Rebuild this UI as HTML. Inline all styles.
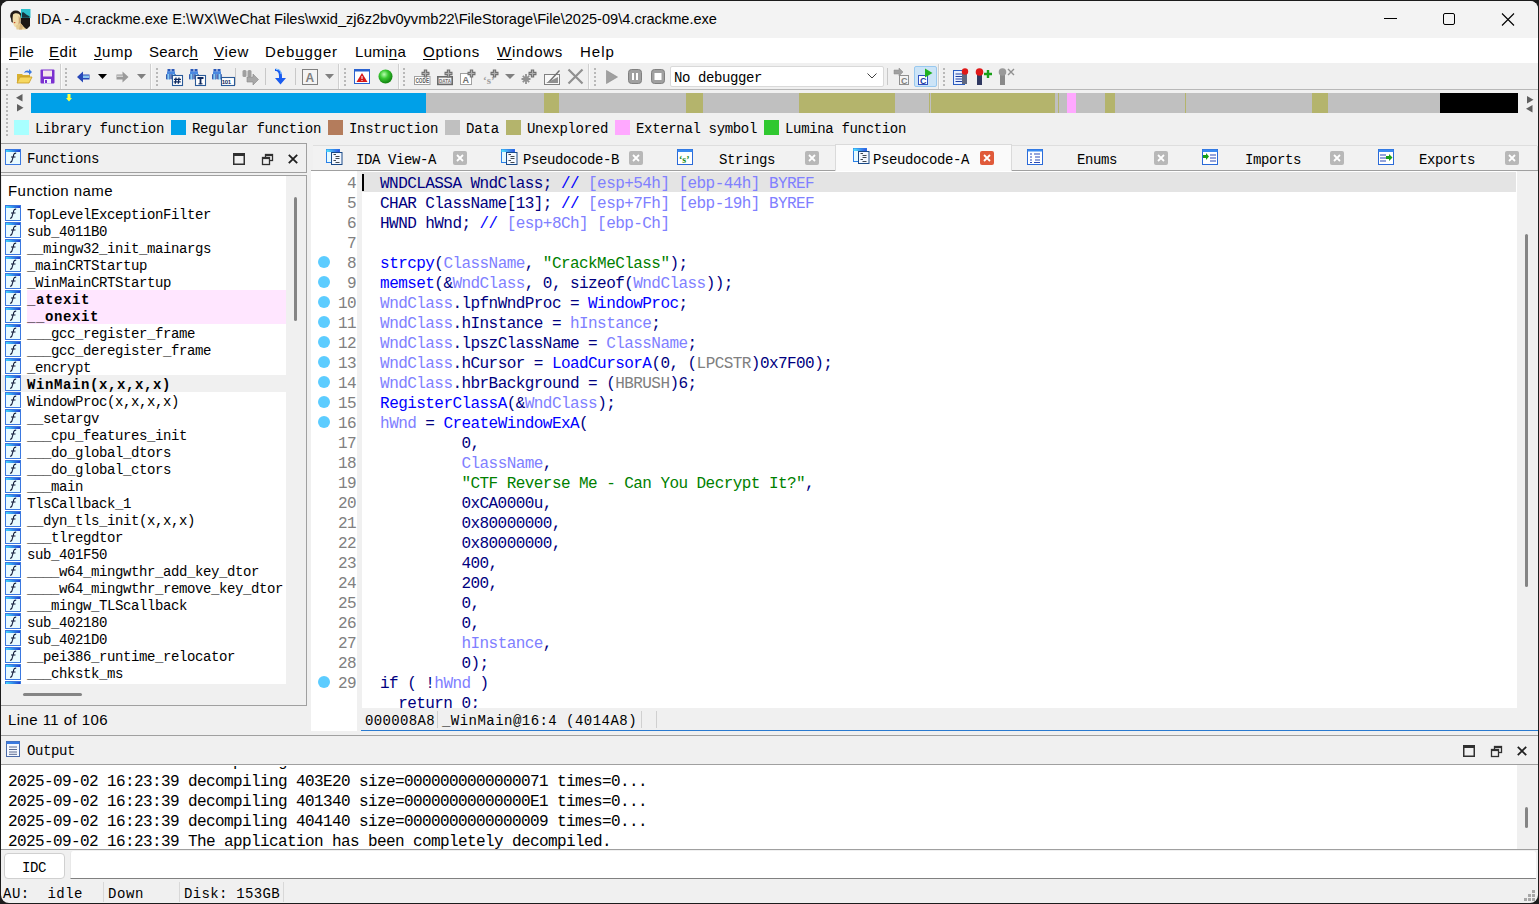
<!DOCTYPE html><html><head><meta charset="utf-8"><style>
*{margin:0;padding:0;box-sizing:border-box}
html,body{width:1539px;height:904px;overflow:hidden;background:#1c1c1c}
body{position:relative;font-family:"Liberation Sans",sans-serif;color:#000}
.a{position:absolute;white-space:pre}
.m{font-family:"Liberation Mono",monospace}
svg{position:absolute;overflow:visible}
</style></head><body>
<svg width="0" height="0" style="position:absolute"><defs><linearGradient id="fb" x1="0" x2="1"><stop offset="0" stop-color="#40d8ff"/><stop offset="1" stop-color="#2040d0"/></linearGradient><symbol id="fi" viewBox="0 0 16 16"><rect x="0.5" y="0.5" width="15" height="15" fill="#e8faff" stroke="#3a78e0"/><rect x="1" y="1" width="14" height="2" fill="url(#fb)"/><path d="M5 13.2 C6.5 13.5 7 12.5 7.5 10 L8.8 5.5 C9.2 4.3 10 4 11.2 4.2 M6 8 L10.5 8" stroke="#101838" stroke-width="1.05" fill="none"/></symbol></defs></svg>
<div class="a" style="left:1px;top:1px;width:1537px;height:902px;background:#f0f0f0;border-radius:8px"></div>
<div class="a" style="left:1px;top:1px;width:1537px;height:37px;background:#f3f3f3;border-radius:8px 8px 0 0"></div>
<svg style="left:10px;top:9px" width="21" height="21" viewBox="0 0 21 21">
<path d="M10 8 L20 8 L20 17 L17 20 L11 19 Z" fill="#1a1614"/>
<ellipse cx="5.8" cy="6.5" rx="5.6" ry="5" fill="#221a16"/>
<path d="M0.5 7 L3 7 L3.5 14 L1.5 13 Z" fill="#221a16"/>
<path d="M3 5.5 C5 3.5 9 3.8 10.3 6.5 C11 9 10.8 13 9.5 16 C8.5 18.5 6 19 4.5 17.5 C3 15.5 2.5 12 2.6 9 Z" fill="#f0dcaa"/>
<path d="M8.5 7 C10 8 10.5 11 10 14 C9.5 16 8.6 17 8 17 C8.8 14 9 10 8.5 7Z" fill="#c9a070"/>
<path d="M6 16.5 L10.5 14 L13 17 L16.5 20.5 L6.5 20.5 Z" fill="#e6cc92"/>
<path d="M10.5 14 L13 17 L12 20.5 L9 20.5 Z" fill="#cfae78"/>
<ellipse cx="4.6" cy="13.6" rx="0.9" ry="0.7" fill="#c84420"/>
<rect x="11" y="0" width="9.5" height="9" fill="#2cc0cc"/>
<path d="M12 3.5 L13.5 3.2 L17 6 L19.5 7.2 L19.5 8.8 L12 8.8 Z" fill="#16363e"/>
</svg>
<div class="a" style="left:37px;top:8px;font-family:'Liberation Sans';font-size:14.6px;font-weight:400;letter-spacing:-0.011px;line-height:22px">IDA - 4.crackme.exe E:\WX\WeChat Files\wxid_zj6z2bv0yvmb22\FileStorage\File\2025-09\4.crackme.exe</div>
<div class="a" style="left:1384px;top:18px;width:13px;height:1px;background:#000"></div>
<div class="a" style="left:1443px;top:13px;width:12px;height:12px;border:1px solid #000;border-radius:2px"></div>
<svg style="left:1501px;top:13px" width="14" height="13" viewBox="0 0 14 13"><path d="M1 0.5 L13 12.5 M13 0.5 L1 12.5" stroke="#000" stroke-width="1.1"/></svg>
<div class="a" style="left:1px;top:38px;width:1537px;height:25px;background:#fff"></div>
<div class="a" style="left:9px;top:42px;font-family:'Liberation Sans';font-size:15px;font-weight:400;letter-spacing:0.207px;line-height:20px;text-underline-offset:2px"><u>F</u>ile</div>
<div class="a" style="left:49px;top:42px;font-family:'Liberation Sans';font-size:15px;font-weight:400;letter-spacing:0.535px;line-height:20px;text-underline-offset:2px"><u>E</u>dit</div>
<div class="a" style="left:94px;top:42px;font-family:'Liberation Sans';font-size:15px;font-weight:400;letter-spacing:0.578px;line-height:20px;text-underline-offset:2px"><u>J</u>ump</div>
<div class="a" style="left:149px;top:42px;font-family:'Liberation Sans';font-size:15px;font-weight:400;letter-spacing:0.245px;line-height:20px;text-underline-offset:2px">Searc<u>h</u></div>
<div class="a" style="left:214px;top:42px;font-family:'Liberation Sans';font-size:15px;font-weight:400;letter-spacing:0.688px;line-height:20px;text-underline-offset:2px"><u>V</u>iew</div>
<div class="a" style="left:265px;top:42px;font-family:'Liberation Sans';font-size:15px;font-weight:400;letter-spacing:0.889px;line-height:20px;text-underline-offset:2px">Deb<u>u</u>gger</div>
<div class="a" style="left:355px;top:42px;font-family:'Liberation Sans';font-size:15px;font-weight:400;letter-spacing:0.299px;line-height:20px;text-underline-offset:2px">Lumi<u>n</u>a</div>
<div class="a" style="left:423px;top:42px;font-family:'Liberation Sans';font-size:15px;font-weight:400;letter-spacing:0.757px;line-height:20px;text-underline-offset:2px"><u>O</u>ptions</div>
<div class="a" style="left:497px;top:42px;font-family:'Liberation Sans';font-size:15px;font-weight:400;letter-spacing:0.734px;line-height:20px;text-underline-offset:2px"><u>W</u>indows</div>
<div class="a" style="left:580px;top:42px;font-family:'Liberation Sans';font-size:15px;font-weight:400;letter-spacing:1.035px;line-height:20px;text-underline-offset:2px">Help</div>
<div class="a" style="left:1px;top:63px;width:1537px;height:26px;background:#f0f0f0"></div>
<div class="a" style="left:1px;top:89px;width:1537px;height:1px;background:#b8b8b8"></div>
<div class="a" style="left:6px;top:68px;width:2px;height:18px;background:repeating-linear-gradient(#b8b8b8 0 2px,transparent 2px 4px)"></div>
<div class="a" style="left:65px;top:68px;width:2px;height:18px;background:repeating-linear-gradient(#b8b8b8 0 2px,transparent 2px 4px)"></div>
<div class="a" style="left:156px;top:68px;width:2px;height:18px;background:repeating-linear-gradient(#b8b8b8 0 2px,transparent 2px 4px)"></div>
<div class="a" style="left:344px;top:68px;width:2px;height:18px;background:repeating-linear-gradient(#b8b8b8 0 2px,transparent 2px 4px)"></div>
<div class="a" style="left:403px;top:68px;width:2px;height:18px;background:repeating-linear-gradient(#b8b8b8 0 2px,transparent 2px 4px)"></div>
<div class="a" style="left:594px;top:68px;width:2px;height:18px;background:repeating-linear-gradient(#b8b8b8 0 2px,transparent 2px 4px)"></div>
<div class="a" style="left:943px;top:68px;width:2px;height:18px;background:repeating-linear-gradient(#b8b8b8 0 2px,transparent 2px 4px)"></div>
<div class="a" style="left:60px;top:64px;width:1px;height:25px;background:#d0d0d0"></div>
<div class="a" style="left:61px;top:64px;width:1px;height:25px;background:#fafafa"></div>
<div class="a" style="left:150px;top:64px;width:1px;height:25px;background:#d0d0d0"></div>
<div class="a" style="left:151px;top:64px;width:1px;height:25px;background:#fafafa"></div>
<div class="a" style="left:338px;top:64px;width:1px;height:25px;background:#d0d0d0"></div>
<div class="a" style="left:339px;top:64px;width:1px;height:25px;background:#fafafa"></div>
<div class="a" style="left:398px;top:64px;width:1px;height:25px;background:#d0d0d0"></div>
<div class="a" style="left:399px;top:64px;width:1px;height:25px;background:#fafafa"></div>
<div class="a" style="left:588px;top:64px;width:1px;height:25px;background:#d0d0d0"></div>
<div class="a" style="left:589px;top:64px;width:1px;height:25px;background:#fafafa"></div>
<div class="a" style="left:938px;top:64px;width:1px;height:25px;background:#d0d0d0"></div>
<div class="a" style="left:939px;top:64px;width:1px;height:25px;background:#fafafa"></div>
<div class="a" style="left:235px;top:68px;width:1px;height:17px;background:#c8c8c8"></div>
<div class="a" style="left:265px;top:68px;width:1px;height:17px;background:#c8c8c8"></div>
<div class="a" style="left:295px;top:68px;width:1px;height:17px;background:#c8c8c8"></div>
<div class="a" style="left:887px;top:68px;width:1px;height:17px;background:#c8c8c8"></div>
<svg style="left:16px;top:68px" width="17" height="17" viewBox="0 0 17 17"><path d="M1 6 L6 6 L7 7 L14 7 L14 9 L4 9 L1 15Z" fill="#d8b030"/><path d="M4 9 L16 9 L13 15 L1 15Z" fill="#f6d860" stroke="#c89a20" stroke-width="0.8"/><path d="M8 5 C9 2 12 2 13 3 L13 1 L16 4 L13 7 L13 5 C11 4 10 4 8 5Z" fill="#3a78e0"/></svg>
<svg style="left:40px;top:69px" width="15" height="15" viewBox="0 0 15 15"><rect x="0.5" y="0.5" width="14" height="14" rx="1" fill="#7b2fd0"/><rect x="3" y="1.5" width="9" height="6" fill="#f4e4ec"/><rect x="4" y="10" width="7" height="4.5" fill="#f0f0ff"/><rect x="5" y="11" width="2" height="3" fill="#7b2fd0"/></svg>
<svg style="left:77px;top:71px" width="13" height="12" viewBox="0 0 13 12"><path d="M0 6 L6 0.5 L6 3.5 L12.5 3.5 L12.5 8.5 L6 8.5 L6 11.5Z" fill="#2848b8"/><path d="M6 4.5 L12 4.5 L12 7 L6 7Z" fill="#8cc8f0"/></svg>
<svg style="left:98px;top:74px" width="9" height="5" viewBox="0 0 9 5"><path d="M0 0 L9 0 L4.5 5Z" fill="#000"/></svg>
<svg style="left:116px;top:71px" width="13" height="12" viewBox="0 0 13 12"><path d="M12.5 6 L6.5 0.5 L6.5 3.5 L0.5 3.5 L0.5 8.5 L6.5 8.5 L6.5 11.5Z" fill="#9a9a9a"/><path d="M1 4.5 L7 4.5 L7 6 L1 6Z" fill="#d0d0d0"/></svg>
<svg style="left:137px;top:74px" width="9" height="5" viewBox="0 0 9 5"><path d="M0 0 L9 0 L4.5 5Z" fill="#808080"/></svg>
<svg style="left:166px;top:69px" width="17" height="17" viewBox="0 0 17 17"><defs><linearGradient id="bg166" x1="0" x2="1"><stop offset="0" stop-color="#1a3a98"/><stop offset="0.5" stop-color="#90d8ff"/><stop offset="1" stop-color="#1a3a98"/></linearGradient></defs><rect x="1.5" y="0" width="3" height="2.6" fill="#2a58b8"/><rect x="5.5" y="0" width="3" height="2.6" fill="#2a58b8"/><rect x="1" y="2.4" width="4" height="3" fill="#4a88e0"/><rect x="5" y="2.4" width="4" height="3" fill="#4a88e0"/><rect x="0" y="5" width="4.6" height="5.5" rx="0.8" fill="url(#bg166)"/><rect x="5.2" y="5" width="4.6" height="5.5" rx="0.8" fill="url(#bg166)"/><rect x="6.5" y="6.5" width="10" height="10" fill="#fff" stroke="#2a5a98" stroke-width="1.1"/><path d="M10 8.5 L9.3 14.8 M13 8.5 L12.3 14.8 M8 10.3 L15 10.3 M7.7 12.9 L14.7 12.9" stroke="#0e2a60" stroke-width="1.3"/></svg>
<svg style="left:189px;top:69px" width="17" height="17" viewBox="0 0 17 17"><defs><linearGradient id="bg189" x1="0" x2="1"><stop offset="0" stop-color="#1a3a98"/><stop offset="0.5" stop-color="#90d8ff"/><stop offset="1" stop-color="#1a3a98"/></linearGradient></defs><rect x="1.5" y="0" width="3" height="2.6" fill="#2a58b8"/><rect x="5.5" y="0" width="3" height="2.6" fill="#2a58b8"/><rect x="1" y="2.4" width="4" height="3" fill="#4a88e0"/><rect x="5" y="2.4" width="4" height="3" fill="#4a88e0"/><rect x="0" y="5" width="4.6" height="5.5" rx="0.8" fill="url(#bg189)"/><rect x="5.2" y="5" width="4.6" height="5.5" rx="0.8" fill="url(#bg189)"/><rect x="6.5" y="6.5" width="10" height="10" fill="#fff" stroke="#2a5a98" stroke-width="1.1"/><path d="M8.5 9 L14.5 9 M11.5 9 L11.5 15.2" stroke="#0e2a60" stroke-width="1.8"/><path d="M9.5 14.8 L13.5 14.8" stroke="#0e2a60" stroke-width="1"/></svg>
<svg style="left:212px;top:69px" width="17" height="17" viewBox="0 0 17 17"><defs><linearGradient id="bg212" x1="0" x2="1"><stop offset="0" stop-color="#1a3a98"/><stop offset="0.5" stop-color="#90d8ff"/><stop offset="1" stop-color="#1a3a98"/></linearGradient></defs><rect x="1.5" y="0" width="3" height="2.6" fill="#2a58b8"/><rect x="5.5" y="0" width="3" height="2.6" fill="#2a58b8"/><rect x="1" y="2.4" width="4" height="3" fill="#4a88e0"/><rect x="5" y="2.4" width="4" height="3" fill="#4a88e0"/><rect x="0" y="5" width="4.6" height="5.5" rx="0.8" fill="url(#bg212)"/><rect x="5.2" y="5" width="4.6" height="5.5" rx="0.8" fill="url(#bg212)"/><rect x="9.5" y="8.5" width="13" height="8" fill="#fff" stroke="#2a5a98" stroke-width="1.1"/><text x="9.8" y="14.6" font-family="Liberation Sans" font-size="6" font-weight="bold" fill="#0e2a60" letter-spacing="-0.3">101</text></svg>
<svg style="left:242px;top:68px" width="17" height="17" viewBox="0 0 17 17"><rect x="0.5" y="2" width="4" height="7" rx="1.5" fill="#a0a0a0"/><rect x="5.5" y="2" width="4" height="7" rx="1.5" fill="#a0a0a0"/><path d="M5 9 L11 9 L11 6 L16.5 11.5 L11 17 L11 14 L5 14Z" fill="#a8a8a8" stroke="#888" stroke-width="0.6"/></svg>
<svg style="left:274px;top:68px" width="13" height="17" viewBox="0 0 13 17"><path d="M1 1 C5 0 8 3 8 8 L8 10 L12 10 L6.5 16.5 L1 10 L5 10 L5 8 C5 5 4 3 1 3Z" fill="#1a5cf0"/><path d="M2 1.5 C5 1 7 3 7 6" stroke="#8fd0ff" stroke-width="1" fill="none"/></svg>
<svg style="left:302px;top:69px" width="16" height="16" viewBox="0 0 16 16"><rect x="0.5" y="0.5" width="15" height="15" fill="#f4f4f4" stroke="#808080"/><text x="3.5" y="13" font-family="Liberation Sans" font-weight="bold" font-size="12" fill="#808080">A</text></svg>
<svg style="left:325px;top:74px" width="9" height="5" viewBox="0 0 9 5"><path d="M0 0 L9 0 L4.5 5Z" fill="#808080"/></svg>
<svg style="left:354px;top:69px" width="16" height="15" viewBox="0 0 16 15"><rect x="0.5" y="0.5" width="15" height="14" fill="#fff" stroke="#2a62d0"/><rect x="0.5" y="0.5" width="15" height="2" fill="#2a62d0"/><path d="M8 4 L13.5 13 L2.5 13Z" fill="#d81818"/><rect x="7.5" y="7" width="1" height="3" fill="#fff"/><rect x="7.5" y="11" width="1" height="1" fill="#fff"/></svg>
<svg style="left:378px;top:69px" width="15" height="15" viewBox="0 0 15 15"><defs><radialGradient id="gc" cx="0.4" cy="0.35" r="0.6"><stop offset="0" stop-color="#b8ffb0"/><stop offset="0.5" stop-color="#38c830"/><stop offset="1" stop-color="#168a14"/></radialGradient></defs><circle cx="7.5" cy="7.5" r="7" fill="url(#gc)"/></svg>
<svg style="left:414px;top:68px" width="18" height="18" viewBox="0 0 18 18"><rect x="0.5" y="8.5" width="15.5" height="8" fill="#fff" stroke="#a0a0a0"/><text x="1.5" y="15.3" font-family="Liberation Sans" font-size="6.5" font-weight="bold" fill="#585858" textLength="13.5" lengthAdjust="spacingAndGlyphs">CODE</text><path d="M11.5 1.5 L11.5 9.5 M7.5 5.5 L15.5 5.5" stroke="#707070" stroke-width="3.4"/><path d="M11.5 2.5 L11.5 8.5 M8.5 5.5 L14.5 5.5" stroke="#b0b0b0" stroke-width="1.2"/></svg>
<svg style="left:437px;top:68px" width="18" height="18" viewBox="0 0 18 18"><rect x="0.8" y="8.8" width="14.4" height="7.6" fill="#f4f4f4" stroke="#6a6a6a" stroke-width="1.6"/><text x="2" y="15" font-family="Liberation Sans" font-size="6" font-weight="bold" fill="#707070" textLength="12" lengthAdjust="spacingAndGlyphs">DATA</text><path d="M11.5 1.5 L11.5 9.5 M7.5 5.5 L15.5 5.5" stroke="#707070" stroke-width="3.4"/><path d="M11.5 2.5 L11.5 8.5 M8.5 5.5 L14.5 5.5" stroke="#b0b0b0" stroke-width="1.2"/></svg>
<svg style="left:460px;top:68px" width="18" height="18" viewBox="0 0 18 18"><rect x="0.5" y="5.5" width="11" height="11" fill="#fff" stroke="#a0a0a0"/><text x="2.5" y="15" font-family="Liberation Sans" font-size="9" font-weight="bold" fill="#707070">A</text><path d="M11.5 1.5 L11.5 9.5 M7.5 5.5 L15.5 5.5" stroke="#707070" stroke-width="3.4"/><path d="M11.5 2.5 L11.5 8.5 M8.5 5.5 L14.5 5.5" stroke="#b0b0b0" stroke-width="1.2"/></svg>
<svg style="left:483px;top:68px" width="18" height="18" viewBox="0 0 18 18"><text x="0" y="16" font-family="Liberation Serif" font-size="11" font-weight="bold" fill="#a0a0a0">‘s’</text><path d="M11.5 1.5 L11.5 9.5 M7.5 5.5 L15.5 5.5" stroke="#707070" stroke-width="3.4"/><path d="M11.5 2.5 L11.5 8.5 M8.5 5.5 L14.5 5.5" stroke="#b0b0b0" stroke-width="1.2"/></svg>
<svg style="left:505px;top:74px" width="10" height="5" viewBox="0 0 10 5"><path d="M0 0 L10 0 L5 5Z" fill="#808080"/></svg>
<svg style="left:521px;top:68px" width="18" height="18" viewBox="0 0 18 18"><path d="M5 6 L5 16 M0.5 11 L9.5 11 M1.8 7.8 L8.2 14.2 M8.2 7.8 L1.8 14.2" stroke="#909090" stroke-width="1.8"/><path d="M11.5 1.5 L11.5 9.5 M7.5 5.5 L15.5 5.5" stroke="#707070" stroke-width="3.4"/><path d="M11.5 2.5 L11.5 8.5 M8.5 5.5 L14.5 5.5" stroke="#b0b0b0" stroke-width="1.2"/></svg>
<svg style="left:544px;top:68px" width="17" height="17" viewBox="0 0 17 17"><rect x="0.5" y="6.5" width="15" height="10" fill="#f8f8f8" stroke="#808080"/><path d="M3 15 L15 2 L16 3 L5 15Z" fill="#707070"/><path d="M2 15 L14 15 L14 9Z" fill="#909090"/></svg>
<svg style="left:567px;top:68px" width="17" height="17" viewBox="0 0 17 17"><path d="M1.5 1.5 L15.5 15.5 M15.5 1.5 L1.5 15.5" stroke="#909090" stroke-width="2.2"/></svg>
<svg style="left:606px;top:70px" width="12" height="14" viewBox="0 0 12 14"><path d="M0.5 0.5 L11.5 7 L0.5 13.5Z" fill="#a0a0a0" stroke="#8a8a8a" stroke-width="0.6"/></svg>
<svg style="left:628px;top:69px" width="14" height="15" viewBox="0 0 14 15"><rect x="0.5" y="0.5" width="13" height="14" rx="3" fill="#a0a0a0" stroke="#808080"/><rect x="4" y="4" width="2" height="7" fill="#fff"/><rect x="8" y="4" width="2" height="7" fill="#fff"/></svg>
<svg style="left:651px;top:69px" width="14" height="15" viewBox="0 0 14 15"><rect x="0.5" y="0.5" width="13" height="14" rx="3" fill="#a0a0a0" stroke="#808080"/><rect x="3.5" y="4" width="7" height="7" fill="#fff"/></svg>
<div class="a" style="left:670px;top:66px;width:214px;height:21px;background:#fff;border:1px solid #d9d9d9;border-radius:2px"></div>
<div class="a" style="left:674px;top:70px;font-family:'Liberation Mono';font-size:14px;font-weight:400;letter-spacing:-0.402px;line-height:17px">No debugger</div>
<svg style="left:867px;top:73px" width="10" height="6" viewBox="0 0 10 6"><path d="M0.5 0.5 L5 5 L9.5 0.5" stroke="#404040" stroke-width="1" fill="none"/></svg>
<svg style="left:893px;top:68px" width="17" height="17" viewBox="0 0 17 17"><path d="M1 2 L6 2 L6 0 L10 4 L6 8 L6 6 L1 6Z" fill="#a0a0a0" stroke="#888" stroke-width="0.5"/><rect x="6.5" y="7.5" width="9" height="9" fill="#f4f4f4" stroke="#909090"/><text x="8" y="15.5" font-family="Liberation Sans" font-size="9" font-weight="bold" fill="#808080">C</text></svg>
<div class="a" style="left:914px;top:66px;width:23px;height:21px;background:#cce4f7;border:1px solid #99c9ef;border-radius:2px"></div>
<svg style="left:917px;top:68px" width="17" height="17" viewBox="0 0 17 17"><rect x="1.5" y="7.5" width="9" height="9" fill="#fff" stroke="#3050c0"/><text x="3" y="15.5" font-family="Liberation Sans" font-size="9" font-weight="bold" fill="#1a3aa0">C</text><path d="M8 0.5 L15.5 5 L8 9.5Z" fill="#20b020"/></svg>
<svg style="left:953px;top:68px" width="16" height="17" viewBox="0 0 16 17"><rect x="0.5" y="2.5" width="11" height="14" fill="#e8f0ff" stroke="#2a5cc0"/><path d="M2.5 6 L9 6 M2.5 8.5 L9 8.5 M2.5 11 L9 11 M2.5 13.5 L9 13.5" stroke="#2040a0" stroke-width="1"/><rect x="9" y="5" width="5" height="11" fill="#606880"/><circle cx="12" cy="3.5" r="3.2" fill="#e01818"/></svg>
<svg style="left:975px;top:68px" width="18" height="17" viewBox="0 0 18 17"><rect x="2" y="5" width="5" height="12" fill="#303860"/><circle cx="4.5" cy="4" r="3.8" fill="#e01818"/><path d="M13 2 L13 10 M9 6 L17 6" stroke="#18a018" stroke-width="2.4"/></svg>
<svg style="left:998px;top:68px" width="18" height="17" viewBox="0 0 18 17"><rect x="2" y="5" width="5" height="12" fill="#8a8a8a"/><circle cx="4.5" cy="4" r="3.8" fill="#9a9a9a"/><path d="M10 1 L16 7 M16 1 L10 7" stroke="#909090" stroke-width="1.4"/></svg>
<div class="a" style="left:6px;top:94px;width:2px;height:44px;background:repeating-linear-gradient(#b8b8b8 0 2px,transparent 2px 4px)"></div>
<svg style="left:16px;top:94px" width="7" height="8" viewBox="0 0 7 8"><path d="M6.5 0 L6.5 7.5 L0 3.75Z" fill="#606060"/></svg>
<svg style="left:17px;top:104px" width="7" height="8" viewBox="0 0 7 8"><path d="M0 0 L0 7.5 L6.5 3.75Z" fill="#606060"/></svg>
<svg style="left:1527px;top:96px" width="7" height="8" viewBox="0 0 7 8"><path d="M0 0 L0 7.5 L6.5 3.75Z" fill="#606060"/></svg>
<svg style="left:1526px;top:105px" width="7" height="8" viewBox="0 0 7 8"><path d="M6.5 0 L6.5 7.5 L0 3.75Z" fill="#606060"/></svg>
<div class="a" style="left:31px;top:93px;width:395px;height:20px;background:#00a0e8"></div>
<div class="a" style="left:426px;top:93px;width:1014px;height:20px;background:#c0c0c0"></div>
<div class="a" style="left:544px;top:93px;width:15px;height:20px;background:#b4b46c"></div>
<div class="a" style="left:686px;top:93px;width:17px;height:20px;background:#b4b46c"></div>
<div class="a" style="left:799px;top:93px;width:96px;height:20px;background:#b4b46c"></div>
<div class="a" style="left:929px;top:93px;width:1px;height:20px;background:#b4b46c"></div>
<div class="a" style="left:931px;top:93px;width:124px;height:20px;background:#b4b46c"></div>
<div class="a" style="left:1058px;top:93px;width:1px;height:20px;background:#b4b46c"></div>
<div class="a" style="left:1067px;top:93px;width:9px;height:20px;background:#ffa8ff"></div>
<div class="a" style="left:1105px;top:93px;width:10px;height:20px;background:#b4b46c"></div>
<div class="a" style="left:1185px;top:93px;width:1px;height:20px;background:#b4b46c"></div>
<div class="a" style="left:1312px;top:93px;width:16px;height:20px;background:#b4b46c"></div>
<div class="a" style="left:1440px;top:93px;width:78px;height:20px;background:#000"></div>
<svg style="left:66px;top:94px" width="6" height="8" viewBox="0 0 6 8"><path d="M1.5 0 L4.5 0 L4.5 4 L6 4 L3 7.5 L0 4 L1.5 4Z" fill="#ffff40"/></svg>
<div class="a" style="left:14px;top:120px;width:15px;height:15px;background:#a8ffff"></div>
<div class="a" style="left:35px;top:121px;font-family:'Liberation Mono';font-size:14px;font-weight:400;letter-spacing:-0.339px;line-height:17px">Library function</div>
<div class="a" style="left:171px;top:120px;width:15px;height:15px;background:#00a0e8"></div>
<div class="a" style="left:192px;top:121px;font-family:'Liberation Mono';font-size:14px;font-weight:400;letter-spacing:-0.339px;line-height:17px">Regular function</div>
<div class="a" style="left:328px;top:120px;width:15px;height:15px;background:#b47c5c"></div>
<div class="a" style="left:349px;top:121px;font-family:'Liberation Mono';font-size:14px;font-weight:400;letter-spacing:-0.311px;line-height:17px">Instruction</div>
<div class="a" style="left:445px;top:120px;width:15px;height:15px;background:#c0c0c0"></div>
<div class="a" style="left:466px;top:121px;font-family:'Liberation Mono';font-size:14px;font-weight:400;letter-spacing:-0.152px;line-height:17px">Data</div>
<div class="a" style="left:506px;top:120px;width:15px;height:15px;background:#b4b46c"></div>
<div class="a" style="left:527px;top:121px;font-family:'Liberation Mono';font-size:14px;font-weight:400;letter-spacing:-0.302px;line-height:17px">Unexplored</div>
<div class="a" style="left:615px;top:120px;width:15px;height:15px;background:#ffa8ff"></div>
<div class="a" style="left:636px;top:121px;font-family:'Liberation Mono';font-size:14px;font-weight:400;letter-spacing:-0.335px;line-height:17px">External symbol</div>
<div class="a" style="left:764px;top:120px;width:15px;height:15px;background:#30c830"></div>
<div class="a" style="left:785px;top:121px;font-family:'Liberation Mono';font-size:14px;font-weight:400;letter-spacing:-0.335px;line-height:17px">Lumina function</div>
<div class="a" style="left:1px;top:143px;width:306px;height:1px;background:#a0a0a0"></div>
<div class="a" style="left:1px;top:143px;width:306px;height:30px;background:#f0f0f0;border:1px solid #a0a0a0;border-left:none"></div>
<defs></defs>
<svg style="left:5px;top:149px" width="16" height="16" viewBox="0 0 16 16"><defs><linearGradient id="fb" x1="0" x2="1"><stop offset="0" stop-color="#40d8ff"/><stop offset="1" stop-color="#2040d0"/></linearGradient></defs><rect x="0.5" y="0.5" width="15" height="15" fill="#e8faff" stroke="#3a78e0"/><rect x="1" y="1" width="14" height="2" fill="url(#fb)"/><path d="M5 13.2 C6.5 13.5 7 12.5 7.5 10 L8.8 5.5 C9.2 4.3 10 4 11.2 4.2 M6 8 L10.5 8" stroke="#101838" stroke-width="1.05" fill="none"/></svg>
<div class="a" style="left:27px;top:151px;font-family:'Liberation Mono';font-size:14px;font-weight:400;letter-spacing:-0.403px;line-height:17px">Functions</div>
<svg style="left:233px;top:153px" width="12" height="12" viewBox="0 0 12 12"><rect x="0.75" y="0.75" width="10.5" height="10.5" fill="none" stroke="#303030" stroke-width="1.5"/><rect x="0" y="0" width="12" height="3" fill="#303030"/></svg>
<svg style="left:262px;top:154px" width="11" height="11" viewBox="0 0 11 11"><rect x="3.5" y="0.5" width="7" height="6" fill="none" stroke="#303030" stroke-width="1.3"/><rect x="3.5" y="0.5" width="7" height="1.6" fill="#303030"/><rect x="0.5" y="3.5" width="7" height="7" fill="#f0f0f0" stroke="#303030" stroke-width="1.3"/><rect x="0.5" y="3.5" width="7" height="1.6" fill="#303030"/></svg>
<svg style="left:288px;top:154px" width="10" height="10" viewBox="0 0 10 10"><path d="M0.8 0.8 L9.2 9.2 M9.2 0.8 L0.8 9.2" stroke="#202020" stroke-width="1.8"/></svg>
<div class="a" style="left:1px;top:175px;width:306px;height:531px;background:#f0f0f0;border:1px solid #a0a0a0;border-left:none"></div>
<div class="a" style="left:2px;top:176px;width:284px;height:508px;background:#fff"></div>
<div class="a" style="left:294px;top:197px;width:3px;height:124px;background:#858585;border-radius:1.5px"></div>
<div class="a" style="left:23px;top:693px;width:59px;height:3px;background:#858585;border-radius:1.5px"></div>
<div class="a" style="left:8px;top:181px;font-family:'Liberation Sans';font-size:15px;font-weight:400;letter-spacing:0.444px;line-height:20px;color:#000">Function name</div>
<div class="a" style="left:2px;top:176px;width:284px;height:508px;overflow:hidden">
<svg style="left:3px;top:29px" width="16" height="16" viewBox="0 0 16 16"><use href="#fi"/></svg>
<div class="a m" style="left:25px;top:31px;font-size:14px;line-height:17px;letter-spacing:-0.4px">TopLevelExceptionFilter</div>
<svg style="left:3px;top:46px" width="16" height="16" viewBox="0 0 16 16"><use href="#fi"/></svg>
<div class="a m" style="left:25px;top:48px;font-size:14px;line-height:17px;letter-spacing:-0.4px">sub_4011B0</div>
<svg style="left:3px;top:63px" width="16" height="16" viewBox="0 0 16 16"><use href="#fi"/></svg>
<div class="a m" style="left:25px;top:65px;font-size:14px;line-height:17px;letter-spacing:-0.4px">__mingw32_init_mainargs</div>
<svg style="left:3px;top:80px" width="16" height="16" viewBox="0 0 16 16"><use href="#fi"/></svg>
<div class="a m" style="left:25px;top:82px;font-size:14px;line-height:17px;letter-spacing:-0.4px">_mainCRTStartup</div>
<svg style="left:3px;top:97px" width="16" height="16" viewBox="0 0 16 16"><use href="#fi"/></svg>
<div class="a m" style="left:25px;top:99px;font-size:14px;line-height:17px;letter-spacing:-0.4px">_WinMainCRTStartup</div>
<div class="a" style="left:25px;top:114px;width:259px;height:17px;background:#ffe6ff"></div>
<svg style="left:3px;top:114px" width="16" height="16" viewBox="0 0 16 16"><use href="#fi"/></svg>
<div class="a m" style="left:25px;top:116px;font-size:14px;line-height:17px;font-weight:bold;letter-spacing:0.6px">_atexit</div>
<div class="a" style="left:25px;top:131px;width:259px;height:17px;background:#ffe6ff"></div>
<svg style="left:3px;top:131px" width="16" height="16" viewBox="0 0 16 16"><use href="#fi"/></svg>
<div class="a m" style="left:25px;top:133px;font-size:14px;line-height:17px;font-weight:bold;letter-spacing:0.6px">__onexit</div>
<svg style="left:3px;top:148px" width="16" height="16" viewBox="0 0 16 16"><use href="#fi"/></svg>
<div class="a m" style="left:25px;top:150px;font-size:14px;line-height:17px;letter-spacing:-0.4px">___gcc_register_frame</div>
<svg style="left:3px;top:165px" width="16" height="16" viewBox="0 0 16 16"><use href="#fi"/></svg>
<div class="a m" style="left:25px;top:167px;font-size:14px;line-height:17px;letter-spacing:-0.4px">___gcc_deregister_frame</div>
<svg style="left:3px;top:182px" width="16" height="16" viewBox="0 0 16 16"><use href="#fi"/></svg>
<div class="a m" style="left:25px;top:184px;font-size:14px;line-height:17px;letter-spacing:-0.4px">_encrypt</div>
<div class="a" style="left:0px;top:199px;width:284px;height:17px;background:#f0f0f0"></div>
<svg style="left:3px;top:199px" width="16" height="16" viewBox="0 0 16 16"><use href="#fi"/></svg>
<div class="a m" style="left:25px;top:201px;font-size:14px;line-height:17px;font-weight:bold;letter-spacing:0.6px">WinMain(x,x,x,x)</div>
<svg style="left:3px;top:216px" width="16" height="16" viewBox="0 0 16 16"><use href="#fi"/></svg>
<div class="a m" style="left:25px;top:218px;font-size:14px;line-height:17px;letter-spacing:-0.4px">WindowProc(x,x,x,x)</div>
<svg style="left:3px;top:233px" width="16" height="16" viewBox="0 0 16 16"><use href="#fi"/></svg>
<div class="a m" style="left:25px;top:235px;font-size:14px;line-height:17px;letter-spacing:-0.4px">__setargv</div>
<svg style="left:3px;top:250px" width="16" height="16" viewBox="0 0 16 16"><use href="#fi"/></svg>
<div class="a m" style="left:25px;top:252px;font-size:14px;line-height:17px;letter-spacing:-0.4px">___cpu_features_init</div>
<svg style="left:3px;top:267px" width="16" height="16" viewBox="0 0 16 16"><use href="#fi"/></svg>
<div class="a m" style="left:25px;top:269px;font-size:14px;line-height:17px;letter-spacing:-0.4px">___do_global_dtors</div>
<svg style="left:3px;top:284px" width="16" height="16" viewBox="0 0 16 16"><use href="#fi"/></svg>
<div class="a m" style="left:25px;top:286px;font-size:14px;line-height:17px;letter-spacing:-0.4px">___do_global_ctors</div>
<svg style="left:3px;top:301px" width="16" height="16" viewBox="0 0 16 16"><use href="#fi"/></svg>
<div class="a m" style="left:25px;top:303px;font-size:14px;line-height:17px;letter-spacing:-0.4px">___main</div>
<svg style="left:3px;top:318px" width="16" height="16" viewBox="0 0 16 16"><use href="#fi"/></svg>
<div class="a m" style="left:25px;top:320px;font-size:14px;line-height:17px;letter-spacing:-0.4px">TlsCallback_1</div>
<svg style="left:3px;top:335px" width="16" height="16" viewBox="0 0 16 16"><use href="#fi"/></svg>
<div class="a m" style="left:25px;top:337px;font-size:14px;line-height:17px;letter-spacing:-0.4px">__dyn_tls_init(x,x,x)</div>
<svg style="left:3px;top:352px" width="16" height="16" viewBox="0 0 16 16"><use href="#fi"/></svg>
<div class="a m" style="left:25px;top:354px;font-size:14px;line-height:17px;letter-spacing:-0.4px">___tlregdtor</div>
<svg style="left:3px;top:369px" width="16" height="16" viewBox="0 0 16 16"><use href="#fi"/></svg>
<div class="a m" style="left:25px;top:371px;font-size:14px;line-height:17px;letter-spacing:-0.4px">sub_401F50</div>
<svg style="left:3px;top:386px" width="16" height="16" viewBox="0 0 16 16"><use href="#fi"/></svg>
<div class="a m" style="left:25px;top:388px;font-size:14px;line-height:17px;letter-spacing:-0.4px">____w64_mingwthr_add_key_dtor</div>
<svg style="left:3px;top:403px" width="16" height="16" viewBox="0 0 16 16"><use href="#fi"/></svg>
<div class="a m" style="left:25px;top:405px;font-size:14px;line-height:17px;letter-spacing:-0.4px">____w64_mingwthr_remove_key_dtor</div>
<svg style="left:3px;top:420px" width="16" height="16" viewBox="0 0 16 16"><use href="#fi"/></svg>
<div class="a m" style="left:25px;top:422px;font-size:14px;line-height:17px;letter-spacing:-0.4px">___mingw_TLScallback</div>
<svg style="left:3px;top:437px" width="16" height="16" viewBox="0 0 16 16"><use href="#fi"/></svg>
<div class="a m" style="left:25px;top:439px;font-size:14px;line-height:17px;letter-spacing:-0.4px">sub_402180</div>
<svg style="left:3px;top:454px" width="16" height="16" viewBox="0 0 16 16"><use href="#fi"/></svg>
<div class="a m" style="left:25px;top:456px;font-size:14px;line-height:17px;letter-spacing:-0.4px">sub_4021D0</div>
<svg style="left:3px;top:471px" width="16" height="16" viewBox="0 0 16 16"><use href="#fi"/></svg>
<div class="a m" style="left:25px;top:473px;font-size:14px;line-height:17px;letter-spacing:-0.4px">__pei386_runtime_relocator</div>
<svg style="left:3px;top:488px" width="16" height="16" viewBox="0 0 16 16"><use href="#fi"/></svg>
<div class="a m" style="left:25px;top:490px;font-size:14px;line-height:17px;letter-spacing:-0.4px">___chkstk_ms</div>
<svg style="left:3px;top:505px" width="16" height="16" viewBox="0 0 16 16"><use href="#fi"/></svg>
</div>
<div class="a" style="left:8px;top:710px;font-family:'Liberation Sans';font-size:15px;font-weight:400;letter-spacing:0.430px;line-height:20px">Line 11 of 106</div>
<div class="a" style="left:1px;top:735px;width:1537px;height:1px;background:#a0a0a0"></div>
<div class="a" style="left:311px;top:170px;width:1227px;height:1px;background:#a0a0a0"></div>
<div class="a" style="left:313px;top:145px;width:172px;height:25px;background:#f2f2f2;border-top:1px solid #dedede"></div>
<div class="a" style="left:485px;top:146px;width:1px;height:24px;background:#dcdcdc"></div>
<svg style="left:326px;top:149px" width="17" height="17" viewBox="0 0 17 17"><defs><linearGradient id="tb326" x1="0" x2="1"><stop offset="0" stop-color="#50e8ff"/><stop offset="1" stop-color="#3050e0"/></linearGradient></defs><rect x="0.5" y="0.5" width="13" height="13" fill="#e6faff" stroke="#2a80e8"/><rect x="0.5" y="0.5" width="13" height="2.5" fill="url(#tb326)"/><rect x="5.5" y="3.5" width="10.5" height="12" fill="#f4f8ff" stroke="#1a4a88"/><path d="M7.5 5.5 L10 5.5 M9.5 7.5 L13.5 7.5 M9.5 9.5 L13.5 9.5 M7.5 11.5 L10 11.5 M9.5 13.5 L13.5 13.5" stroke="#404850" stroke-width="1.2"/></svg>
<div class="a" style="left:356px;top:152px;font-family:'Liberation Mono';font-size:14px;font-weight:400;letter-spacing:-0.402px;line-height:17px">IDA View-A</div>
<svg style="left:453px;top:151px" width="14" height="14" viewBox="0 0 14 14"><rect x="0" y="0" width="14" height="14" rx="2" fill="#b8b8b8"/><path d="M4 4 L10 10 M10 4 L4 10" stroke="#fff" stroke-width="1.8"/></svg>
<div class="a" style="left:485px;top:145px;width:176px;height:25px;background:#f2f2f2;border-top:1px solid #dedede"></div>
<div class="a" style="left:661px;top:146px;width:1px;height:24px;background:#dcdcdc"></div>
<svg style="left:501px;top:149px" width="17" height="17" viewBox="0 0 17 17"><defs><linearGradient id="tb501" x1="0" x2="1"><stop offset="0" stop-color="#50e8ff"/><stop offset="1" stop-color="#3050e0"/></linearGradient></defs><rect x="0.5" y="0.5" width="13" height="13" fill="#e6faff" stroke="#2a80e8"/><rect x="0.5" y="0.5" width="13" height="2.5" fill="url(#tb501)"/><rect x="5.5" y="3.5" width="10.5" height="12" fill="#f4f8ff" stroke="#1a4a88"/><path d="M7.5 5.5 L10 5.5 M9.5 7.5 L13.5 7.5 M9.5 9.5 L13.5 9.5 M7.5 11.5 L10 11.5 M9.5 13.5 L13.5 13.5" stroke="#404850" stroke-width="1.2"/></svg>
<div class="a" style="left:523px;top:152px;font-family:'Liberation Mono';font-size:14px;font-weight:400;letter-spacing:-0.402px;line-height:17px">Pseudocode-B</div>
<svg style="left:629px;top:151px" width="14" height="14" viewBox="0 0 14 14"><rect x="0" y="0" width="14" height="14" rx="2" fill="#b8b8b8"/><path d="M4 4 L10 10 M10 4 L4 10" stroke="#fff" stroke-width="1.8"/></svg>
<div class="a" style="left:661px;top:145px;width:174px;height:25px;background:#f2f2f2;border-top:1px solid #dedede"></div>
<div class="a" style="left:835px;top:146px;width:1px;height:24px;background:#dcdcdc"></div>
<svg style="left:677px;top:149px" width="16" height="16" viewBox="0 0 16 16"><rect x="0.5" y="0.5" width="15" height="15" fill="#fff" stroke="#2a6ad8"/><rect x="0.5" y="0.5" width="15" height="2.5" fill="#3a8af0"/><text x="2" y="13.5" font-family="Liberation Serif" font-weight="bold" font-size="10" fill="#1a8a1a">‘s’</text></svg>
<div class="a" style="left:719px;top:152px;font-family:'Liberation Mono';font-size:14px;font-weight:400;letter-spacing:-0.402px;line-height:17px">Strings</div>
<svg style="left:805px;top:151px" width="14" height="14" viewBox="0 0 14 14"><rect x="0" y="0" width="14" height="14" rx="2" fill="#b8b8b8"/><path d="M4 4 L10 10 M10 4 L4 10" stroke="#fff" stroke-width="1.8"/></svg>
<div class="a" style="left:835px;top:144px;width:177px;height:27px;background:#fafafa;border:1px solid #dadada;border-bottom:none"></div>
<svg style="left:853px;top:148px" width="17" height="17" viewBox="0 0 17 17"><defs><linearGradient id="tb853" x1="0" x2="1"><stop offset="0" stop-color="#50e8ff"/><stop offset="1" stop-color="#3050e0"/></linearGradient></defs><rect x="0.5" y="0.5" width="13" height="13" fill="#e6faff" stroke="#2a80e8"/><rect x="0.5" y="0.5" width="13" height="2.5" fill="url(#tb853)"/><rect x="5.5" y="3.5" width="10.5" height="12" fill="#f4f8ff" stroke="#1a4a88"/><path d="M7.5 5.5 L10 5.5 M9.5 7.5 L13.5 7.5 M9.5 9.5 L13.5 9.5 M7.5 11.5 L10 11.5 M9.5 13.5 L13.5 13.5" stroke="#404850" stroke-width="1.2"/></svg>
<div class="a" style="left:873px;top:152px;font-family:'Liberation Mono';font-size:14px;font-weight:400;letter-spacing:-0.402px;line-height:17px">Pseudocode-A</div>
<svg style="left:980px;top:151px" width="14" height="14" viewBox="0 0 14 14"><rect x="0" y="0" width="14" height="14" rx="2" fill="#e05a3a"/><path d="M4 4 L10 10 M10 4 L4 10" stroke="#fff" stroke-width="1.8"/></svg>
<div class="a" style="left:1012px;top:145px;width:174px;height:25px;background:#f2f2f2;border-top:1px solid #dedede"></div>
<div class="a" style="left:1186px;top:146px;width:1px;height:24px;background:#dcdcdc"></div>
<svg style="left:1027px;top:149px" width="16" height="16" viewBox="0 0 16 16"><rect x="0.5" y="0.5" width="15" height="15" fill="#fff" stroke="#2a6ad8"/><rect x="0.5" y="0.5" width="15" height="2" fill="#3a8af0"/><path d="M3 5 L5 5 M3 8 L5 8 M3 11 L5 11 M3 13.5 L5 13.5 M7 5 L13 5 M8 8 L13 8 M8 11 L13 11 M7 13.5 L13 13.5" stroke="#2a4ab8" stroke-width="1.2"/></svg>
<div class="a" style="left:1077px;top:152px;font-family:'Liberation Mono';font-size:14px;font-weight:400;letter-spacing:-0.403px;line-height:17px">Enums</div>
<svg style="left:1154px;top:151px" width="14" height="14" viewBox="0 0 14 14"><rect x="0" y="0" width="14" height="14" rx="2" fill="#b8b8b8"/><path d="M4 4 L10 10 M10 4 L4 10" stroke="#fff" stroke-width="1.8"/></svg>
<div class="a" style="left:1186px;top:145px;width:174px;height:25px;background:#f2f2f2;border-top:1px solid #dedede"></div>
<div class="a" style="left:1360px;top:146px;width:1px;height:24px;background:#dcdcdc"></div>
<svg style="left:1202px;top:149px" width="16" height="16" viewBox="0 0 16 16"><rect x="0.5" y="0.5" width="15" height="15" fill="#fff" stroke="#2a6ad8"/><rect x="0.5" y="0.5" width="15" height="2.5" fill="#3a8af0"/><path d="M8 6 L14 6 M8 9 L14 9 M8 12 L14 12" stroke="#2a4ab8" stroke-width="1.2"/><path d="M1 6 L4 6 L4 4 L7 7.5 L4 11 L4 9 L1 9Z" fill="#18a018"/></svg>
<div class="a" style="left:1245px;top:152px;font-family:'Liberation Mono';font-size:14px;font-weight:400;letter-spacing:-0.402px;line-height:17px">Imports</div>
<svg style="left:1330px;top:151px" width="14" height="14" viewBox="0 0 14 14"><rect x="0" y="0" width="14" height="14" rx="2" fill="#b8b8b8"/><path d="M4 4 L10 10 M10 4 L4 10" stroke="#fff" stroke-width="1.8"/></svg>
<div class="a" style="left:1360px;top:145px;width:177px;height:25px;background:#f2f2f2;border-top:1px solid #dedede"></div>
<div class="a" style="left:1537px;top:146px;width:1px;height:24px;background:#dcdcdc"></div>
<svg style="left:1378px;top:149px" width="16" height="16" viewBox="0 0 16 16"><rect x="0.5" y="0.5" width="15" height="15" fill="#fff" stroke="#2a6ad8"/><rect x="0.5" y="0.5" width="15" height="2.5" fill="#3a8af0"/><path d="M2 6 L8 6 M2 9 L8 9 M2 12 L8 12" stroke="#2a4ab8" stroke-width="1.2"/><path d="M8 7 L11 7 L11 5 L14.5 8.5 L11 12 L11 10 L8 10Z" fill="#18a018"/></svg>
<div class="a" style="left:1419px;top:152px;font-family:'Liberation Mono';font-size:14px;font-weight:400;letter-spacing:-0.402px;line-height:17px">Exports</div>
<svg style="left:1505px;top:151px" width="14" height="14" viewBox="0 0 14 14"><rect x="0" y="0" width="14" height="14" rx="2" fill="#b8b8b8"/><path d="M4 4 L10 10 M10 4 L4 10" stroke="#fff" stroke-width="1.8"/></svg>
<div class="a" style="left:311px;top:171px;width:46px;height:560px;background:#fff"></div>
<div class="a" style="left:357px;top:171px;width:5px;height:560px;background:#f0f0f0"></div>
<div class="a" style="left:362px;top:171px;width:1155px;height:538px;background:#fff"></div>
<div class="a" style="left:362px;top:172px;width:1154px;height:20px;background:#e4e4e4"></div>
<div class="a" style="left:362px;top:174px;width:2px;height:17px;background:#000"></div>
<div class="a" style="left:1517px;top:171px;width:21px;height:559px;background:#f0f0f0"></div>
<div class="a" style="left:1525px;top:234px;width:3px;height:353px;background:#858585;border-radius:1.5px"></div>
<div class="a" style="left:311px;top:171px;width:1206px;height:538px;overflow:hidden">
<div class="a m" style="left:0;top:3px;width:45px;text-align:right;font-size:16px;letter-spacing:-0.6px;line-height:20px;color:#808080">4</div>
<div class="a m" style="left:51px;top:3px;font-size:16px;letter-spacing:-0.56px;line-height:20px"><span style="color:#000080">  WNDCLASSA WndClass; </span><span style="color:#0000ff">// </span><span style="color:#8080ff">[esp+54h] [ebp-44h] BYREF</span></div>
<div class="a m" style="left:0;top:23px;width:45px;text-align:right;font-size:16px;letter-spacing:-0.6px;line-height:20px;color:#808080">5</div>
<div class="a m" style="left:51px;top:23px;font-size:16px;letter-spacing:-0.56px;line-height:20px"><span style="color:#000080">  CHAR ClassName[13]; </span><span style="color:#0000ff">// </span><span style="color:#8080ff">[esp+7Fh] [ebp-19h] BYREF</span></div>
<div class="a m" style="left:0;top:43px;width:45px;text-align:right;font-size:16px;letter-spacing:-0.6px;line-height:20px;color:#808080">6</div>
<div class="a m" style="left:51px;top:43px;font-size:16px;letter-spacing:-0.56px;line-height:20px"><span style="color:#000080">  HWND hWnd; </span><span style="color:#0000ff">// </span><span style="color:#8080ff">[esp+8Ch] [ebp-Ch]</span></div>
<div class="a m" style="left:0;top:63px;width:45px;text-align:right;font-size:16px;letter-spacing:-0.6px;line-height:20px;color:#808080">7</div>
<div class="a m" style="left:51px;top:63px;font-size:16px;letter-spacing:-0.56px;line-height:20px"></div>
<div class="a m" style="left:0;top:83px;width:45px;text-align:right;font-size:16px;letter-spacing:-0.6px;line-height:20px;color:#808080">8</div>
<div class="a" style="left:7px;top:85px;width:12px;height:12px;border-radius:6px;background:#5cccff"></div>
<div class="a m" style="left:51px;top:83px;font-size:16px;letter-spacing:-0.56px;line-height:20px"><span style="color:#000080">  </span><span style="color:#0000ff">strcpy</span><span style="color:#000080">(</span><span style="color:#8080ff">ClassName</span><span style="color:#000080">, </span><span style="color:#008000">&quot;CrackMeClass&quot;</span><span style="color:#000080">);</span></div>
<div class="a m" style="left:0;top:103px;width:45px;text-align:right;font-size:16px;letter-spacing:-0.6px;line-height:20px;color:#808080">9</div>
<div class="a" style="left:7px;top:105px;width:12px;height:12px;border-radius:6px;background:#5cccff"></div>
<div class="a m" style="left:51px;top:103px;font-size:16px;letter-spacing:-0.56px;line-height:20px"><span style="color:#000080">  </span><span style="color:#0000ff">memset</span><span style="color:#000080">(&amp;</span><span style="color:#8080ff">WndClass</span><span style="color:#000080">, 0, sizeof(</span><span style="color:#8080ff">WndClass</span><span style="color:#000080">));</span></div>
<div class="a m" style="left:0;top:123px;width:45px;text-align:right;font-size:16px;letter-spacing:-0.6px;line-height:20px;color:#808080">10</div>
<div class="a" style="left:7px;top:125px;width:12px;height:12px;border-radius:6px;background:#5cccff"></div>
<div class="a m" style="left:51px;top:123px;font-size:16px;letter-spacing:-0.56px;line-height:20px"><span style="color:#000080">  </span><span style="color:#8080ff">WndClass</span><span style="color:#000080">.lpfnWndProc = </span><span style="color:#0000ff">WindowProc</span><span style="color:#000080">;</span></div>
<div class="a m" style="left:0;top:143px;width:45px;text-align:right;font-size:16px;letter-spacing:-0.6px;line-height:20px;color:#808080">11</div>
<div class="a" style="left:7px;top:145px;width:12px;height:12px;border-radius:6px;background:#5cccff"></div>
<div class="a m" style="left:51px;top:143px;font-size:16px;letter-spacing:-0.56px;line-height:20px"><span style="color:#000080">  </span><span style="color:#8080ff">WndClass</span><span style="color:#000080">.hInstance = </span><span style="color:#8080ff">hInstance</span><span style="color:#000080">;</span></div>
<div class="a m" style="left:0;top:163px;width:45px;text-align:right;font-size:16px;letter-spacing:-0.6px;line-height:20px;color:#808080">12</div>
<div class="a" style="left:7px;top:165px;width:12px;height:12px;border-radius:6px;background:#5cccff"></div>
<div class="a m" style="left:51px;top:163px;font-size:16px;letter-spacing:-0.56px;line-height:20px"><span style="color:#000080">  </span><span style="color:#8080ff">WndClass</span><span style="color:#000080">.lpszClassName = </span><span style="color:#8080ff">ClassName</span><span style="color:#000080">;</span></div>
<div class="a m" style="left:0;top:183px;width:45px;text-align:right;font-size:16px;letter-spacing:-0.6px;line-height:20px;color:#808080">13</div>
<div class="a" style="left:7px;top:185px;width:12px;height:12px;border-radius:6px;background:#5cccff"></div>
<div class="a m" style="left:51px;top:183px;font-size:16px;letter-spacing:-0.56px;line-height:20px"><span style="color:#000080">  </span><span style="color:#8080ff">WndClass</span><span style="color:#000080">.hCursor = </span><span style="color:#0000ff">LoadCursorA</span><span style="color:#000080">(0, (</span><span style="color:#808080">LPCSTR</span><span style="color:#000080">)0x7F00);</span></div>
<div class="a m" style="left:0;top:203px;width:45px;text-align:right;font-size:16px;letter-spacing:-0.6px;line-height:20px;color:#808080">14</div>
<div class="a" style="left:7px;top:205px;width:12px;height:12px;border-radius:6px;background:#5cccff"></div>
<div class="a m" style="left:51px;top:203px;font-size:16px;letter-spacing:-0.56px;line-height:20px"><span style="color:#000080">  </span><span style="color:#8080ff">WndClass</span><span style="color:#000080">.hbrBackground = (</span><span style="color:#808080">HBRUSH</span><span style="color:#000080">)6;</span></div>
<div class="a m" style="left:0;top:223px;width:45px;text-align:right;font-size:16px;letter-spacing:-0.6px;line-height:20px;color:#808080">15</div>
<div class="a" style="left:7px;top:225px;width:12px;height:12px;border-radius:6px;background:#5cccff"></div>
<div class="a m" style="left:51px;top:223px;font-size:16px;letter-spacing:-0.56px;line-height:20px"><span style="color:#000080">  </span><span style="color:#0000ff">RegisterClassA</span><span style="color:#000080">(&amp;</span><span style="color:#8080ff">WndClass</span><span style="color:#000080">);</span></div>
<div class="a m" style="left:0;top:243px;width:45px;text-align:right;font-size:16px;letter-spacing:-0.6px;line-height:20px;color:#808080">16</div>
<div class="a" style="left:7px;top:245px;width:12px;height:12px;border-radius:6px;background:#5cccff"></div>
<div class="a m" style="left:51px;top:243px;font-size:16px;letter-spacing:-0.56px;line-height:20px"><span style="color:#000080">  </span><span style="color:#8080ff">hWnd</span><span style="color:#000080"> = </span><span style="color:#0000ff">CreateWindowExA</span><span style="color:#000080">(</span></div>
<div class="a m" style="left:0;top:263px;width:45px;text-align:right;font-size:16px;letter-spacing:-0.6px;line-height:20px;color:#808080">17</div>
<div class="a m" style="left:51px;top:263px;font-size:16px;letter-spacing:-0.56px;line-height:20px"><span style="color:#000080">           0,</span></div>
<div class="a m" style="left:0;top:283px;width:45px;text-align:right;font-size:16px;letter-spacing:-0.6px;line-height:20px;color:#808080">18</div>
<div class="a m" style="left:51px;top:283px;font-size:16px;letter-spacing:-0.56px;line-height:20px"><span style="color:#000080">           </span><span style="color:#8080ff">ClassName</span><span style="color:#000080">,</span></div>
<div class="a m" style="left:0;top:303px;width:45px;text-align:right;font-size:16px;letter-spacing:-0.6px;line-height:20px;color:#808080">19</div>
<div class="a m" style="left:51px;top:303px;font-size:16px;letter-spacing:-0.56px;line-height:20px"><span style="color:#000080">           </span><span style="color:#008000">&quot;CTF Reverse Me - Can You Decrypt It?&quot;</span><span style="color:#000080">,</span></div>
<div class="a m" style="left:0;top:323px;width:45px;text-align:right;font-size:16px;letter-spacing:-0.6px;line-height:20px;color:#808080">20</div>
<div class="a m" style="left:51px;top:323px;font-size:16px;letter-spacing:-0.56px;line-height:20px"><span style="color:#000080">           0xCA0000u,</span></div>
<div class="a m" style="left:0;top:343px;width:45px;text-align:right;font-size:16px;letter-spacing:-0.6px;line-height:20px;color:#808080">21</div>
<div class="a m" style="left:51px;top:343px;font-size:16px;letter-spacing:-0.56px;line-height:20px"><span style="color:#000080">           0x80000000,</span></div>
<div class="a m" style="left:0;top:363px;width:45px;text-align:right;font-size:16px;letter-spacing:-0.6px;line-height:20px;color:#808080">22</div>
<div class="a m" style="left:51px;top:363px;font-size:16px;letter-spacing:-0.56px;line-height:20px"><span style="color:#000080">           0x80000000,</span></div>
<div class="a m" style="left:0;top:383px;width:45px;text-align:right;font-size:16px;letter-spacing:-0.6px;line-height:20px;color:#808080">23</div>
<div class="a m" style="left:51px;top:383px;font-size:16px;letter-spacing:-0.56px;line-height:20px"><span style="color:#000080">           400,</span></div>
<div class="a m" style="left:0;top:403px;width:45px;text-align:right;font-size:16px;letter-spacing:-0.6px;line-height:20px;color:#808080">24</div>
<div class="a m" style="left:51px;top:403px;font-size:16px;letter-spacing:-0.56px;line-height:20px"><span style="color:#000080">           200,</span></div>
<div class="a m" style="left:0;top:423px;width:45px;text-align:right;font-size:16px;letter-spacing:-0.6px;line-height:20px;color:#808080">25</div>
<div class="a m" style="left:51px;top:423px;font-size:16px;letter-spacing:-0.56px;line-height:20px"><span style="color:#000080">           0,</span></div>
<div class="a m" style="left:0;top:443px;width:45px;text-align:right;font-size:16px;letter-spacing:-0.6px;line-height:20px;color:#808080">26</div>
<div class="a m" style="left:51px;top:443px;font-size:16px;letter-spacing:-0.56px;line-height:20px"><span style="color:#000080">           0,</span></div>
<div class="a m" style="left:0;top:463px;width:45px;text-align:right;font-size:16px;letter-spacing:-0.6px;line-height:20px;color:#808080">27</div>
<div class="a m" style="left:51px;top:463px;font-size:16px;letter-spacing:-0.56px;line-height:20px"><span style="color:#000080">           </span><span style="color:#8080ff">hInstance</span><span style="color:#000080">,</span></div>
<div class="a m" style="left:0;top:483px;width:45px;text-align:right;font-size:16px;letter-spacing:-0.6px;line-height:20px;color:#808080">28</div>
<div class="a m" style="left:51px;top:483px;font-size:16px;letter-spacing:-0.56px;line-height:20px"><span style="color:#000080">           0);</span></div>
<div class="a m" style="left:0;top:503px;width:45px;text-align:right;font-size:16px;letter-spacing:-0.6px;line-height:20px;color:#808080">29</div>
<div class="a" style="left:7px;top:505px;width:12px;height:12px;border-radius:6px;background:#5cccff"></div>
<div class="a m" style="left:51px;top:503px;font-size:16px;letter-spacing:-0.56px;line-height:20px"><span style="color:#000080">  if ( !</span><span style="color:#8080ff">hWnd</span><span style="color:#000080"> )</span></div>
<div class="a m" style="left:51px;top:523px;font-size:16px;letter-spacing:-0.56px;line-height:20px;height:14px;overflow:hidden"><span style="color:#000080">    return 0;</span></div>
</div>
<div class="a" style="left:361px;top:708px;width:1156px;height:22px;background:#f0f0f0"></div>
<div class="a" style="left:361px;top:730px;width:1177px;height:1px;background:#2a7ad0"></div>
<div class="a" style="left:365px;top:713px;font-family:'Liberation Mono';font-size:14px;font-weight:400;letter-spacing:0.348px;line-height:17px">000008A8</div>
<div class="a" style="left:437px;top:711px;width:1px;height:17px;background:#d0d0d0"></div>
<div class="a" style="left:442px;top:713px;font-family:'Liberation Mono';font-size:14px;font-weight:400;letter-spacing:0.462px;line-height:17px">_WinMain@16:4 (4014A8)</div>
<div class="a" style="left:641px;top:711px;width:1px;height:17px;background:#d0d0d0"></div>
<div class="a" style="left:656px;top:711px;width:1px;height:17px;background:#d0d0d0"></div>
<div class="a" style="left:1px;top:735px;width:1537px;height:30px;background:#f0f0f0;border-top:1px solid #a0a0a0;border-bottom:1px solid #a0a0a0"></div>
<svg style="left:6px;top:741px" width="15" height="16" viewBox="0 0 15 16"><rect x="0.5" y="0.5" width="13" height="15" fill="#f4f8ff" stroke="#4a6aa8"/><rect x="0.5" y="0.5" width="13" height="2.5" fill="#3a7ae0"/><path d="M3 6 L11 6 M3 8.5 L11 8.5 M3 11 L11 11 M3 13.3 L11 13.3" stroke="#5a6a90" stroke-width="1"/></svg>
<div class="a" style="left:27px;top:743px;font-family:'Liberation Mono';font-size:14px;font-weight:400;letter-spacing:-0.404px;line-height:17px">Output</div>
<svg style="left:1463px;top:745px" width="12" height="12" viewBox="0 0 12 12"><rect x="0.75" y="0.75" width="10.5" height="10.5" fill="none" stroke="#303030" stroke-width="1.5"/><rect x="0" y="0" width="12" height="3" fill="#303030"/></svg>
<svg style="left:1491px;top:746px" width="11" height="11" viewBox="0 0 11 11"><rect x="3.5" y="0.5" width="7" height="6" fill="none" stroke="#303030" stroke-width="1.3"/><rect x="3.5" y="0.5" width="7" height="1.6" fill="#303030"/><rect x="0.5" y="3.5" width="7" height="7" fill="#f0f0f0" stroke="#303030" stroke-width="1.3"/><rect x="0.5" y="3.5" width="7" height="1.6" fill="#303030"/></svg>
<svg style="left:1517px;top:746px" width="10" height="10" viewBox="0 0 10 10"><path d="M0.8 0.8 L9.2 9.2 M9.2 0.8 L0.8 9.2" stroke="#202020" stroke-width="1.8"/></svg>
<div class="a" style="left:1px;top:765px;width:1537px;height:85px;background:#fff"></div>
<div class="a" style="left:1517px;top:765px;width:21px;height:85px;background:#f0f0f0"></div>
<div class="a" style="left:1525px;top:807px;width:3px;height:21px;background:#858585;border-radius:1.5px"></div>
<div class="a" style="left:1px;top:766px;width:1516px;height:83px;overflow:hidden">
<div class="a m" style="left:7px;top:-14px;font-size:16px;letter-spacing:-0.6px;line-height:20px;color:#000">2025-09-02 16:23:39 decompiling 4013A0 size=0000000000000054 times=0...</div>
<div class="a m" style="left:7px;top:6px;font-size:16px;letter-spacing:-0.6px;line-height:20px;color:#000">2025-09-02 16:23:39 decompiling 403E20 size=0000000000000071 times=0...</div>
<div class="a m" style="left:7px;top:26px;font-size:16px;letter-spacing:-0.6px;line-height:20px;color:#000">2025-09-02 16:23:39 decompiling 401340 size=00000000000000E1 times=0...</div>
<div class="a m" style="left:7px;top:46px;font-size:16px;letter-spacing:-0.6px;line-height:20px;color:#000">2025-09-02 16:23:39 decompiling 404140 size=0000000000000009 times=0...</div>
<div class="a m" style="left:7px;top:66px;font-size:16px;letter-spacing:-0.6px;line-height:20px;color:#000">2025-09-02 16:23:39 The application has been completely decompiled.</div>
</div>
<div class="a" style="left:1px;top:849px;width:1537px;height:1px;background:#a0a0a0"></div>
<div class="a" style="left:4px;top:853px;width:61px;height:26px;background:#fff;border:1px solid #d0d0d0;border-radius:4px"></div>
<div class="a" style="left:22px;top:860px;font-family:'Liberation Mono';font-size:14px;font-weight:400;letter-spacing:-0.406px;line-height:17px">IDC</div>
<div class="a" style="left:70px;top:851px;width:1466px;height:28px;background:#fff;border-bottom:1px solid #808080;border-left:1px solid #e8e8e8;border-radius:3px 3px 0 0"></div>
<div class="a" style="left:3px;top:886px;font-family:'Liberation Mono';font-size:14px;font-weight:400;letter-spacing:0.486px;line-height:17px">AU:  idle</div>
<div class="a" style="left:103px;top:882px;width:1px;height:20px;background:#d8d8d8"></div>
<div class="a" style="left:108px;top:886px;font-family:'Liberation Mono';font-size:14px;font-weight:400;letter-spacing:0.598px;line-height:17px">Down</div>
<div class="a" style="left:179px;top:882px;width:1px;height:20px;background:#d8d8d8"></div>
<div class="a" style="left:184px;top:886px;font-family:'Liberation Mono';font-size:14px;font-weight:400;letter-spacing:0.325px;line-height:17px">Disk: 153GB</div>
<div class="a" style="left:283px;top:882px;width:1px;height:20px;background:#d8d8d8"></div>
<div class="a" style="left:1532px;top:890px;width:3px;height:3px;background:#a8a8a8"></div>
<div class="a" style="left:1528px;top:894px;width:3px;height:3px;background:#a8a8a8"></div>
<div class="a" style="left:1532px;top:894px;width:3px;height:3px;background:#a8a8a8"></div>
<div class="a" style="left:1524px;top:898px;width:3px;height:3px;background:#a8a8a8"></div>
<div class="a" style="left:1528px;top:898px;width:3px;height:3px;background:#a8a8a8"></div>
<div class="a" style="left:1532px;top:898px;width:3px;height:3px;background:#a8a8a8"></div>
</body></html>
